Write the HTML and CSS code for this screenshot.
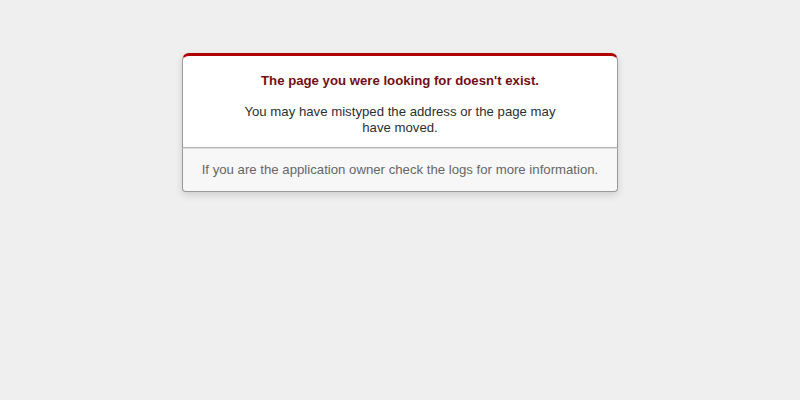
FILE: index.html
```html
<!DOCTYPE html>
<html>
<head>
<meta charset="utf-8">
<title>The page you were looking for doesn't exist (404)</title>
<link rel="stylesheet" href="styles.css">
</head>
<body class="error-page">
  <div class="dialog">
    <div class="dialog-main">
      <h1>The page you were looking for doesn't exist.</h1>
      <p>You may have mistyped the address or the page may have moved.</p>
    </div>
    <p class="dialog-foot">If you are the application owner check the logs for more information.</p>
  </div>
</body>
</html>
```

FILE: styles.css
```css
html, body {
  margin: 0;
}

.error-page {
  background-color: #EFEFEF;
  color: #2E2F30;
  text-align: center;
  font-family: "Liberation Sans", Arial, sans-serif;
  font-size: 13.2px;
  line-height: 16px;
}

.dialog {
  width: 95%;
  max-width: 33em;
  margin: 4em auto 0;
}

.dialog-main {
  border: 1px solid #CCC;
  border-right-color: #999;
  border-left-color: #999;
  border-bottom-color: #BBB;
  border-top: #B00100 solid 3px;
  border-top-left-radius: 7px;
  border-top-right-radius: 7px;
  background-color: #fff;
  padding: 6px 12% 0;
  box-shadow: 0 3px 7px rgba(50, 50, 50, 0.17);
}

.dialog-main h1 {
  font-size: 100%;
  color: #730E15;
  line-height: 1.5em;
  margin: 0.67em 0;
}

.dialog-main p {
  margin: 1em 0 11px;
}

.dialog-foot {
  margin: 0 0 1em;
  padding: 1em;
  background-color: #F7F7F7;
  border: 1px solid #CCC;
  border-right-color: #999;
  border-left-color: #999;
  border-bottom-color: #999;
  border-bottom-left-radius: 4px;
  border-bottom-right-radius: 4px;
  border-top-color: #DADADA;
  color: #666;
  box-shadow: 0 3px 7px rgba(50, 50, 50, 0.17);
}
```
